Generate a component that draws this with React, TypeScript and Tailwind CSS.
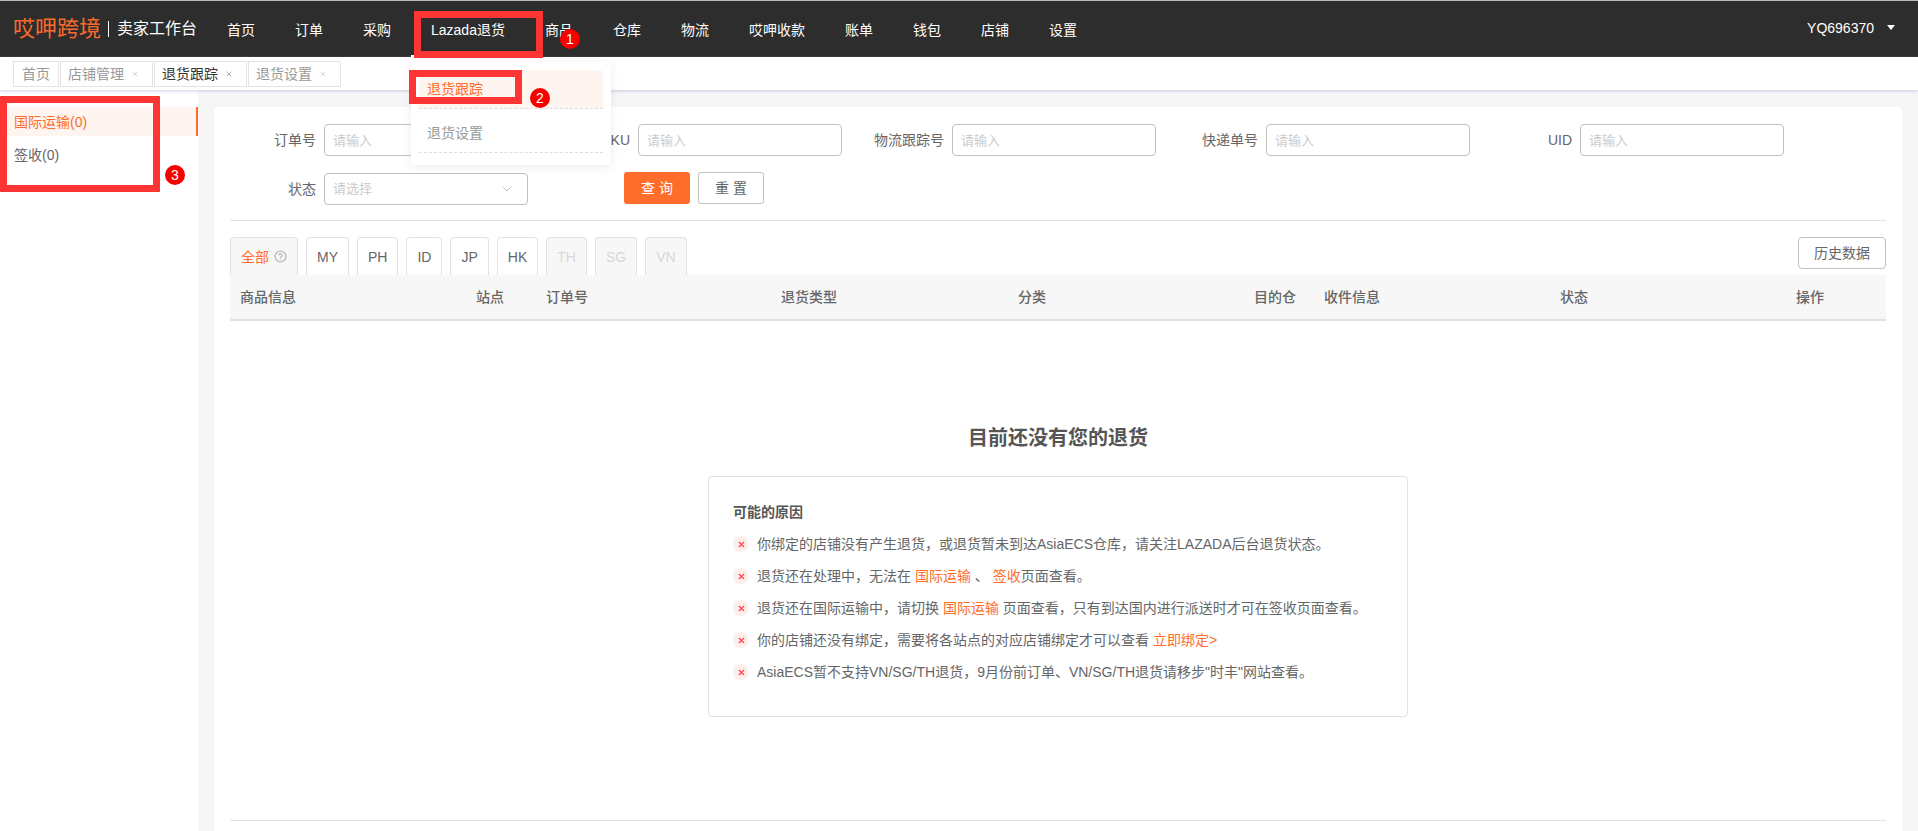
import { ChevronDown, CircleHelp, X } from 'lucide-react'

const navItems = ['首页', '订单', '采购', 'Lazada退货', '商品', '仓库', '物流', '哎呷收款', '账单', '钱包', '店铺', '设置']
const filters = ['订单号', 'SKU', '物流跟踪号', '快递单号', 'UID']
const sites = ['MY', 'PH', 'ID', 'JP', 'HK']
const closedSites = ['TH', 'SG', 'VN']
const columns = ['商品信息', '站点', '订单号', '退货类型', '分类', '目的仓', '收件信息', '状态', '操作']

function Reason({ children }: { children: React.ReactNode }) {
  return (
    <div className="flex h-8 items-center">
      <span className="mr-2 flex h-4 w-4 shrink-0 items-center justify-center rounded-full bg-[#ffecec]">
        <X size={9} strokeWidth={3} className="text-[#f43f3f]" />
      </span>
      <span className="whitespace-nowrap">{children}</span>
    </div>
  )
}

function Link({ children }: { children: React.ReactNode }) {
  return <span className="text-[#ff6d2d]">{children}</span>
}

function Badge({ n, className }: { n: number; className: string }) {
  return (
    <span className={`absolute z-30 flex h-5 w-5 items-center justify-center rounded-full bg-[#f70000] text-sm text-white ${className}`}>
      {n}
    </span>
  )
}

function Tab({ title, active }: { title: string; active?: boolean }) {
  return (
    <span className={`ml-px flex h-[26px] w-[93px] items-center gap-[7px] border border-[#e4e4e4] pl-[7px] ${active ? 'text-[#333]' : 'text-[#999]'}`}>
      {title}
      <X size={8} strokeWidth={1.5} className={active ? 'text-[#555]' : 'text-[#aaa]'} />
    </span>
  )
}

export default function App() {
  return (
    <div className="relative flex h-[831px] w-[1918px] flex-col overflow-hidden bg-[#f6f6f6] font-['Liberation_Sans','Noto_Sans_CJK_SC',sans-serif] text-sm leading-[22px] text-[#666]">
      {/* Header */}
      <header className="flex h-[57px] shrink-0 items-center border-t border-[#bbb] bg-[#2d2d2d] pl-[13px] text-white">
        <span className="w-[87px] whitespace-nowrap text-[22px] leading-none text-[#f96a2b]">哎呷跨境</span>
        <span className="ml-2 h-4 w-px bg-white" />
        <span className="ml-2 w-[80px] whitespace-nowrap text-base leading-none">卖家工作台</span>
        <nav className="ml-[10px] flex h-full">
          {navItems.map((item) => (
            <a key={item} className="flex h-full items-center whitespace-nowrap px-5 pt-px">
              {item}
            </a>
          ))}
        </nav>
        <div className="ml-auto mr-[23px] flex items-center gap-[13px] pb-[3px]">
          <span>YQ696370</span>
          <span className="h-0 w-0 border-x-4 border-t-[5px] border-x-transparent border-t-white" />
        </div>
      </header>

      {/* Open tabs */}
      <div className="z-10 flex h-[33px] shrink-0 items-start bg-white pl-[13px] pt-1 shadow-[0_1px_3px_rgba(170,170,210,0.6)]">
        <span className="flex h-[26px] w-[46px] items-center justify-center border border-[#e4e4e4] text-[#999]">首页</span>
        <Tab title="店铺管理" />
        <Tab title="退货跟踪" active />
        <Tab title="退货设置" />
      </div>

      <div className="flex min-h-0 flex-1">
        {/* Side menu */}
        <aside className="w-[198px] shrink-0 bg-white pt-[17px]">
          <div className="flex h-[29px] items-center border-r-2 border-[#ff6d2d] bg-[#fff5f0] pl-[14px] text-[#ff6d2d]">国际运输(0)</div>
          <div className="flex h-[38px] items-center pl-[14px]">签收(0)</div>
        </aside>

        {/* Main card */}
        <main className="ml-4 mr-4 mt-[17px] flex-1 rounded-t bg-white px-4 pt-[17px]">
          <div className="-mx-4 grid grid-cols-[repeat(5,314px)]">
            {filters.map((label) => (
              <div key={label} className="flex items-center">
                <label className="mr-2 w-[102px] text-right">{label}</label>
                <input
                  placeholder="请输入"
                  className="h-8 w-[204px] rounded border border-[#c0c0c0] px-2 text-[13px] placeholder:text-[#ccc]"
                />
              </div>
            ))}
          </div>

          <div className="-ml-4 mt-4 flex items-center">
            <label className="mr-2 w-[102px] text-right">状态</label>
            <div className="flex h-8 w-[204px] items-center justify-between rounded border border-[#c0c0c0] pl-2 pr-3 text-[13px] text-[#ccc]">
              请选择
              <ChevronDown size={16} strokeWidth={1.25} className="text-[#bbb]" />
            </div>
            <button className="mb-[2px] ml-[96px] h-8 w-[66px] rounded-[3px] bg-[#ff6d2d] text-white">查 询</button>
            <button className="mb-[2px] ml-2 h-8 w-[66px] rounded-[3px] border border-[#c0c0c0] bg-white">重 置</button>
          </div>

          <div className="mt-[14px] h-px bg-[#e2e2e2]" />

          {/* Site tabs */}
          <div className="mt-4 flex h-[38px] items-start gap-2">
            <span className="flex h-[38px] w-[68px] items-center gap-[5px] rounded-t border border-b-0 border-[#e2e2e2] bg-[#f7f7f7] pl-[10px] text-[#ff6d2d]">
              全部
              <CircleHelp size={13} strokeWidth={2.5} className="text-[#bbb]" />
            </span>
            {sites.map((site) => (
              <span key={site} className="flex h-[38px] items-center rounded-t border border-b-0 border-[#e2e2e2] bg-white px-[10px]">
                {site}
              </span>
            ))}
            {closedSites.map((site) => (
              <span key={site} className="flex h-[38px] items-center rounded-t border border-b-0 border-[#e2e2e2] bg-[#f7f7f7] px-[10px] text-[#d8d8d8]">
                {site}
              </span>
            ))}
            <button className="ml-auto h-8 w-[88px] rounded border border-[#c0c0c0] bg-white">历史数据</button>
          </div>

          {/* Table head */}
          <div className="grid h-[46px] grid-cols-[236px_70px_235px_237px_236px_70px_236px_236px_1fr] items-center border-b-2 border-[#e2e2e2] bg-[#f7f7f7] pl-[10px] font-medium">
            {columns.map((col) => (
              <span key={col}>{col}</span>
            ))}
          </div>

          {/* Empty state */}
          <div className="flex flex-col items-center">
            <h2 className="mt-[103px] text-xl font-bold leading-7 text-[#555]">目前还没有您的退货</h2>
            <div className="mt-6 h-[241px] w-[700px] rounded border border-[#e2e2e2] px-6 pt-6">
              <p className="mb-[5px] font-bold text-[#555]">可能的原因</p>
              <Reason>你绑定的店铺没有产生退货，或退货暂未到达AsiaECS仓库，请关注LAZADA后台退货状态。</Reason>
              <Reason>
                退货还在处理中，无法在 <Link>国际运输</Link> 、 <Link>签收</Link>页面查看。
              </Reason>
              <Reason>
                退货还在国际运输中，请切换 <Link>国际运输</Link> 页面查看，只有到达国内进行派送时才可在签收页面查看。
              </Reason>
              <Reason>
                你的店铺还没有绑定，需要将各站点的对应店铺绑定才可以查看 <Link>立即绑定&gt;</Link>
              </Reason>
              <Reason>AsiaECS暂不支持VN/SG/TH退货，9月份前订单、VN/SG/TH退货请移步"时丰"网站查看。</Reason>
            </div>
            <div className="mt-[103px] h-px w-full bg-[#e2e2e2]" />
          </div>
        </main>
      </div>

      {/* Dropdown of the active menu item */}
      <div className="absolute left-[411px] top-[55px] z-20 h-[2px] w-[10px] bg-white" />
      <div className="absolute left-[411px] top-[62px] z-20 h-[103px] w-[200px] rounded bg-white px-2 pt-2 shadow-[0_2px_10px_rgba(0,0,0,0.08)]">
        <div className="flex h-[39px] items-center rounded-t border-b border-dashed border-[#ddd] bg-[#fff5f0] pl-2 text-[#ff6d2d]">退货跟踪</div>
        <div className="flex h-[44px] items-center border-b border-dashed border-[#ddd] pl-2 pt-1 text-[#999]">退货设置</div>
      </div>

      {/* Red annotations drawn over the screenshot */}
      <div className="absolute left-[414px] top-[11px] z-30 h-[47px] w-[129px] border-[7px] border-[#fe3535]" />
      <div className="absolute left-[409px] top-[70px] z-30 h-[34px] w-[113px] border-[7px] border-[#fe3535]" />
      <div className="absolute left-0 top-[96px] z-30 h-[96px] w-[160px] border-[7px] border-[#fe3535]" />
      <Badge n={1} className="left-[560px] top-[29px]" />
      <Badge n={2} className="left-[530px] top-[88px]" />
      <Badge n={3} className="left-[165px] top-[165px]" />
    </div>
  )
}
